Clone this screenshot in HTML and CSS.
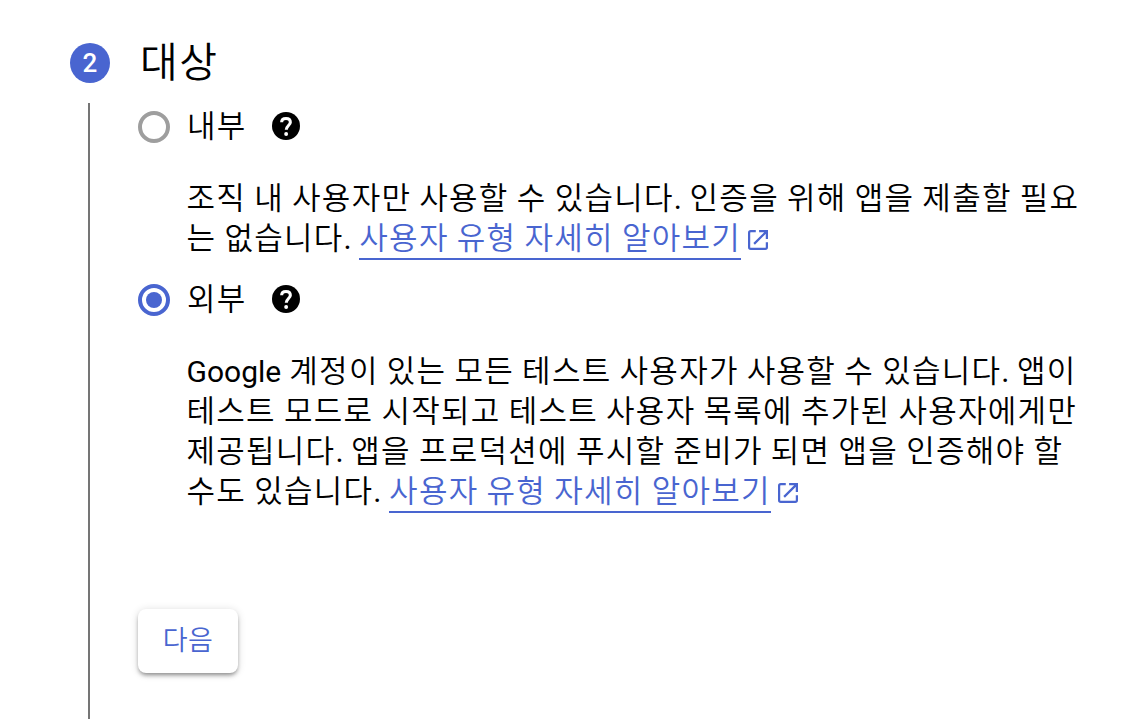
FILE: index.html
```html
<!DOCTYPE html>
<html lang="ko">
<head>
  <meta charset="UTF-8">
  <meta name="viewport" content="width=device-width, initial-scale=1" />
  <title>대상</title>
  <link rel="stylesheet" href="styles.css">
</head>
<body>
<div class="step">
  <div class="step-header">
    <span class="step-number">2</span>
    <h2>대상</h2>
  </div>
  <div class="step-body">
    <div class="option">
      <label class="option-label">
        <span class="radio"></span>
        <span class="name">내부</span>
        <svg class="help" viewBox="2 2 20 20"><circle cx="12" cy="12" r="10"/><path d="M8.9 9.3C8.9 7.6 10.2 6.6 12 6.6s3.1 1 3.1 2.7c0 2.2-2.9 2.6-2.9 5.4"/><circle class="dot" cx="12.1" cy="17.7" r="1.4"/></svg>
      </label>
      <p>
        <span class="line">조직 내 사용자만 사용할 수 있습니다<b>.</b> 인증을 위해 앱을 제출할 필요</span>
        <span class="line">는 없습니다<b>.</b> <a href="#">사용자 유형 자세히 알아보기</a><svg class="open" viewBox="3 3 18 18"><path d="M10 4H5.500Q4 4 4 5.500V18.500Q4 20 5.500 20H18.500Q20 20 20 18.500V14M13 4H20V11M20 4L8.500 15.500"/></svg></span>
      </p>
    </div>
    <div class="option">
      <label class="option-label">
        <span class="radio checked"></span>
        <span class="name">외부</span>
        <svg class="help" viewBox="2 2 20 20"><circle cx="12" cy="12" r="10"/><path d="M8.9 9.3C8.9 7.6 10.2 6.6 12 6.6s3.1 1 3.1 2.7c0 2.2-2.9 2.6-2.9 5.4"/><circle class="dot" cx="12.1" cy="17.7" r="1.4"/></svg>
      </label>
      <p>
        <span class="line"><span class="latin">Google</span> 계정이 있는 모든 테스트 사용자가 사용할 수 있습니다<b>.</b> 앱이</span>
        <span class="line">테스트 모드로 시작되고 테스트 사용자 목록에 추가된 사용자에게만</span>
        <span class="line">제공됩니다<b>.</b> 앱을 프로덕션에 푸시할 준비가 되면 앱을 인증해야 할</span>
        <span class="line">수도 있습니다<b>.</b> <a href="#">사용자 유형 자세히 알아보기</a><svg class="open" viewBox="3 3 18 18"><path d="M10 4H5.500Q4 4 4 5.500V18.500Q4 20 5.500 20H18.500Q20 20 20 18.500V14M13 4H20V11M20 4L8.500 15.500"/></svg></span>
      </p>
    </div>
    <button class="next">다음</button>
  </div>
</div>
</body>
</html>
```
FILE: styles.css
```css
* {
  box-sizing: border-box;
}
body {
  margin: 0;
  background: #fff;
  color: #000;
  font-family: Roboto, "Noto Sans CJK KR", sans-serif;
  font-weight: 350;
  overflow: hidden;
}
.step {
  height: 719px;
  padding: 39px 40px 0 70px;
  display: flex;
  flex-direction: column;
}
.step-header {
  display: flex;
  align-items: center;
  gap: 30px;
  height: 48px;
}
.step-number {
  width: 40px;
  height: 40px;
  border-radius: 50%;
  background: #4965d0;
  color: #fff;
  font-size: 26px;
  font-weight: 500;
  line-height: 40px;
  text-align: center;
}
h2 {
  margin: 0;
  font-size: 41px;
  font-weight: 350;
  letter-spacing: 1.5px;
  line-height: 48px;
}
.step-body {
  flex: 1;
  margin: 16px 0 0 18px;
  padding-left: 48px;
  border-left: 2px solid #757575;
}
.option {
  height: 173px;
}
.option + .option {
  height: 333px;
}
.option-label {
  display: flex;
  align-items: center;
  height: 48px;
}
.radio {
  display: flex;
  align-items: center;
  justify-content: center;
  width: 32px;
  height: 32px;
  margin-right: 17px;
  border: 4px solid #9e9e9e;
  border-radius: 50%;
}
.checked {
  border-color: #4965d0;
}
.checked::after {
  content: "";
  width: 16px;
  height: 16px;
  border-radius: 50%;
  background: #4965d0;
}
.name {
  width: 85px;
  font-size: 31px;
  letter-spacing: 1.13px;
  line-height: 48px;
}
.help {
  width: 28px;
  height: 28px;
  margin-bottom: 2px;
}
.help path {
  fill: none;
  stroke: #fff;
  stroke-width: 2.2;
}
.help .dot {
  fill: #fff;
}
p {
  margin: 28px 0 0 48.5px;
  font-size: 31px;
  letter-spacing: 1.26px;
  word-spacing: -0.7px;
  line-height: 40px;
}
.line {
  display: block;
  white-space: nowrap;
}
.latin {
  font-size: 30px;
  font-weight: 400;
  letter-spacing: 0;
}
b {
  font-weight: 400;
  letter-spacing: -0.5px;
}
a {
  display: inline-block;
  height: 41px;
  margin-bottom: -1px;
  border-bottom: 2px solid #4965d0;
  color: #4965d0;
  text-decoration: none;
  vertical-align: top;
}
.open {
  width: 20px;
  height: 20px;
  margin: 0 0 -1px 7px;
  fill: none;
  stroke: #4965d0;
  stroke-width: 2;
}
.next {
  width: 100px;
  height: 64px;
  padding: 0 0 5px;
  border: 0;
  border-radius: 8px;
  background: #fff;
  color: #4965d0;
  box-shadow: 0 3px 4px -1px rgba(0,0,0,0.4), 0 1px 8px rgba(0,0,0,0.14);
  font: inherit;
  font-size: 27px;
  letter-spacing: 0.5px;
}
```
